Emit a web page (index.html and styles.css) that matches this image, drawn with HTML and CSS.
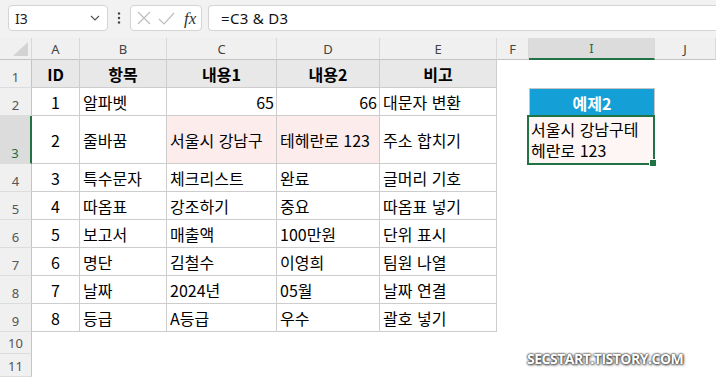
FILE: index.html
```html
<!DOCTYPE html>
<html lang="ko">
<head>
<meta charset="utf-8">
<title>Excel</title>
<link rel="stylesheet" href="styles.css">
</head>
<body>
<div class="app">
  <div class="fbar">
    <div class="namebox"><span>I3</span>
      <svg class="chev" width="10" height="6" viewBox="0 0 10 6"><path d="M1 1 L5 5 L9 1" fill="none" stroke="#555" stroke-width="1.2"/></svg>
    </div>
    <div class="dots">
      <svg width="4" height="12" viewBox="0 0 4 12"><circle cx="2" cy="1.5" r="1.2" fill="#444"/><circle cx="2" cy="6" r="1.2" fill="#444"/><circle cx="2" cy="10.5" r="1.2" fill="#444"/></svg>
    </div>
    <div class="fbtns">
      <svg width="14" height="14" viewBox="0 0 14 14"><path d="M1 1 L13 13 M13 1 L1 13" stroke="#bdbdbd" stroke-width="1.2" fill="none"/></svg>
      <svg width="17" height="13" viewBox="0 0 17 13"><path d="M1 7 L6 12 L16 1" stroke="#bdbdbd" stroke-width="1.2" fill="none"/></svg>
      <span class="fx">fx</span>
    </div>
    <div class="formula">=C3 &amp; D3</div>
  </div>

  <div class="sheet">
    <div class="ch corner"><svg width="16" height="15" viewBox="0 0 16 15"><path d="M0 14 L15 0 L15 14 Z" fill="#d3d3d3"/></svg></div>
    <div class="ch">A</div><div class="ch">B</div><div class="ch">C</div><div class="ch">D</div><div class="ch">E</div><div class="ch">F</div><div class="ch selc">I</div><div class="ch">J</div>

    <div class="rh">1</div>
    <div class="c t hd">ID</div><div class="c t hd">항목</div><div class="c t hd">내용1</div><div class="c t hd">내용2</div><div class="c t hd">비고</div>
    <div class="c"></div><div class="c"></div><div class="c"></div>

    <div class="rh">2</div>
    <div class="c t ctr">1</div><div class="c t">알파벳</div><div class="c t r">65</div><div class="c t r">66</div><div class="c t">대문자 변환</div>
    <div class="c"></div><div class="c blue">예제2</div><div class="c"></div>

    <div class="rh selr">3</div>
    <div class="c t ctr">2</div><div class="c t">줄바꿈</div><div class="c t pink">서울시 강남구</div><div class="c t pink">테헤란로 123</div><div class="c t">주소 합치기</div>
    <div class="c"></div><div class="c sel">서울시 강남구테헤란로 123</div><div class="c"></div>

    <div class="rh">4</div>
    <div class="c t ctr">3</div><div class="c t">특수문자</div><div class="c t">체크리스트</div><div class="c t">완료</div><div class="c t">글머리 기호</div>
    <div class="c"></div><div class="c"></div><div class="c"></div>

    <div class="rh">5</div>
    <div class="c t ctr">4</div><div class="c t">따옴표</div><div class="c t">강조하기</div><div class="c t">중요</div><div class="c t">따옴표 넣기</div>
    <div class="c"></div><div class="c"></div><div class="c"></div>

    <div class="rh">6</div>
    <div class="c t ctr">5</div><div class="c t">보고서</div><div class="c t">매출액</div><div class="c t">100만원</div><div class="c t">단위 표시</div>
    <div class="c"></div><div class="c"></div><div class="c"></div>

    <div class="rh">7</div>
    <div class="c t ctr">6</div><div class="c t">명단</div><div class="c t">김철수</div><div class="c t">이영희</div><div class="c t">팀원 나열</div>
    <div class="c"></div><div class="c"></div><div class="c"></div>

    <div class="rh">8</div>
    <div class="c t ctr">7</div><div class="c t">날짜</div><div class="c t">2024년</div><div class="c t">05월</div><div class="c t">날짜 연결</div>
    <div class="c"></div><div class="c"></div><div class="c"></div>

    <div class="rh">9</div>
    <div class="c t ctr">8</div><div class="c t">등급</div><div class="c t">A등급</div><div class="c t">우수</div><div class="c t">괄호 넣기</div>
    <div class="c"></div><div class="c"></div><div class="c"></div>

    <div class="rh">10</div>
    <div class="c"></div><div class="c"></div><div class="c"></div><div class="c"></div><div class="c"></div><div class="c"></div><div class="c"></div><div class="c"></div>

    <div class="rh">11</div>
    <div class="c"></div><div class="c"></div><div class="c"></div><div class="c"></div><div class="c"></div><div class="c"></div><div class="c"></div><div class="c"></div>
  </div>

  <div class="watermark">SECSTART.TISTORY.COM</div>
</div>
</body>
</html>
```

FILE: styles.css
```css
* { box-sizing: border-box; }
html, body { margin: 0; padding: 0; background: #fff; }
body { font-family: "Noto Sans CJK KR", "Noto Sans", sans-serif; color: #000; }

.app { position: relative; width: 716px; height: 377px; overflow: hidden; }

.fbar {
  height: 38px;
  background: #f2f2f2;
  display: flex;
  align-items: flex-start;
  padding: 5px 0 0 8px;
}
.namebox {
  width: 100px; height: 26px;
  background: #fff;
  border: 1px solid #d4d4d4;
  border-radius: 4px;
  display: flex; align-items: center; justify-content: space-between;
  padding: 0 7px 0 6px;
  font-family: "Noto Sans", sans-serif; font-size: 14px; color: #222;
}
.dots { width: 22px; height: 26px; display: flex; align-items: center; justify-content: center; }
.fbtns {
  width: 72px; height: 26px;
  background: #fff;
  border: 1px solid #d4d4d4;
  border-radius: 4px;
  display: flex; align-items: center;
  padding: 0 0 0 6px; gap: 7px;
}
.fx { font-family: "Liberation Serif", serif; font-style: italic; font-size: 17px; color: #333; margin-left: 2px; line-height: 1; }
.formula {
  flex: 1; height: 26px; margin-left: 6px;
  background: #fff;
  border: 1px solid #d4d4d4; border-right: none;
  border-radius: 4px 0 0 4px;
  display: flex; align-items: center;
  padding-left: 12px;
  font-family: "Noto Sans", sans-serif; font-size: 15px; letter-spacing: 0.3px; color: #111;
}

.sheet {
  display: grid;
  grid-template-columns: 32px 48px 87px 110px 103px 117px 32px 126px 1fr;
  grid-template-rows: 22px 28px 28px 48px 28px 28px 28px 28px 28px 28px 22px 23px;
}
.ch {
  background: #f0f0f0;
  border-right: 1px solid #d9d9d9;
  border-bottom: 1px solid #c4c4c4;
  display: flex; align-items: center; justify-content: center;
  font-family: "Noto Sans", sans-serif; font-size: 13px; color: #444;
}
.corner { justify-content: flex-end; align-items: flex-end; padding: 0 2px 2px 0; }
.selc { background: #dcdcdc; border-bottom: 2px solid #217346; color: #1f6e43; }

.rh {
  background: #f0f0f0;
  border-right: 1px solid #c4c4c4;
  border-bottom: 1px solid #dcdcdc;
  display: flex; align-items: flex-end; justify-content: center;
  padding-bottom: 1px;
  font-family: "Noto Sans", sans-serif; font-size: 13px; color: #555;
}
.selr { background: #dcdcdc; border-right: 2px solid #217346; color: #1f6e43; }

.c {
  display: flex; align-items: center;
  padding: 0 3px;
  font-size: 16px;
  white-space: nowrap;
  overflow: hidden;
}
.t { border-right: 1px solid #cdcdcd; border-bottom: 1px solid #cdcdcd; }
.hd { background: #e8e8e8; font-weight: bold; justify-content: center; }
.ctr { justify-content: center; }
.r { justify-content: flex-end; padding-right: 2px; }
.pink { background: #fdecec; }

.blue {
  background: #14a0d6; color: #fff; font-weight: bold; justify-content: center;
  border: 1px solid #c4c4c4; border-bottom: none;
}
.sel {
  position: relative; overflow: visible;
  background: #fdf6f4;
  white-space: normal; word-break: break-all;
  line-height: 21px;
  padding: 0 5px 0 2px;
}
.sel::after {
  content: ""; position: absolute;
  top: -1px; left: -2px; right: 0; bottom: -1px;
  border: 2px solid #217346;
}
.sel::before {
  content: ""; position: absolute; z-index: 1;
  width: 6px; height: 6px; right: -2px; bottom: -3px;
  background: #217346; border: 1px solid #fff;
}

.watermark {
  position: absolute; left: 527px; top: 349px;
  font-family: "Open Sans", sans-serif; font-weight: 700; font-size: 14px; letter-spacing: -0.5px;
  color: #fff;
  text-shadow: 0 0 2px #333, 0 0 2px #333, 1px 1px 3px #555;
}
```
